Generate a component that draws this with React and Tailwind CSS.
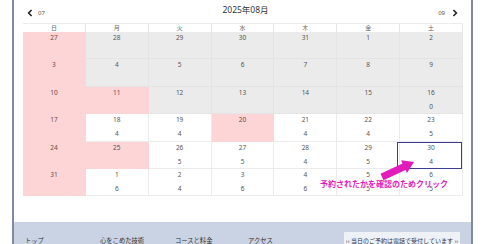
import React from "react";

const P = "pink", G = "gray", W = "white";
const rows = [
  [[27, P], [28, G], [29, G], [30, G], [31, G], [1, G], [2, G]],
  [[3, P], [4, G], [5, G], [6, G], [7, G], [8, G], [9, G]],
  [[10, P], [11, P], [12, G], [13, G], [14, G], [15, G], [16, G, 0]],
  [[17, P], [18, W, 4], [19, W, 4], [20, P], [21, W, 4], [22, W, 4], [23, W, 5]],
  [[24, P], [25, P], [26, W, 5], [27, W, 5], [28, W, 4], [29, W, 5], [30, W, 4, true]],
  [[31, P], [1, W, 6], [2, W, 4], [3, W, 6], [4, W, 6], [5, W, 5], [6, W, 5]],
];
const days = ["日", "月", "火", "水", "木", "金", "土"];

const bgClass = {
  pink: "bg-[#fdd5d6] border-[#fdd5d6] text-[#6e4848]",
  gray: "bg-[#ebebeb] border-[#e4e4e4] text-[#555]",
  white: "bg-white border-[#ebebeb] text-[#555]",
};

function Cell({ d, t, c, hl }) {
  return (
    <div className={`relative h-[27.4px] flex flex-col items-center pt-[1px] border-r border-b ${bgClass[t]}`}>
      <span className="text-[6.5px] leading-[9px]">{d}</span>
      {c !== undefined && <span className="mt-[5px] text-[6.5px] leading-[9px] text-[#555]">{c}</span>}
      {hl && <div className="absolute left-[-3px] right-[0px] top-[0px] bottom-[-1px] border-[1.5px] border-[#3d3d8e]" />}
    </div>
  );
}

function Chevron({ dir }) {
  return (
    <svg width="6" height="8" viewBox="0 0 6 8">
      {dir === "left" ? (
        <path d="M4.6 1 L1.6 4 L4.6 7" fill="none" stroke="#222" strokeWidth="1.6" />
      ) : (
        <path d="M1.4 1 L4.4 4 L1.4 7" fill="none" stroke="#222" strokeWidth="1.6" />
      )}
    </svg>
  );
}

export default function App() {
  return (
    <div
      className="relative w-[485px] h-[244px] overflow-hidden bg-white"
      style={{ fontFamily: '"Noto Sans", "Noto Sans CJK JP", sans-serif' }}
    >
      <div className="ml-[12px] w-[461px] h-full border-l-2 border-r-2 border-[#7f8ba6] flex flex-col overflow-hidden">
        {/* nav */}
        <div className="shrink-0 h-[23px] flex items-center justify-between px-[13px] pb-[2px]">
          <div className="flex items-center gap-[5px] w-[40px] pt-[4px]">
            <Chevron dir="left" />
            <span className="text-[6px] text-[#555] leading-none">07</span>
          </div>
          <div className="text-[8.5px] text-[#333] pl-[6px] leading-none pb-[1px]">2025年08月</div>
          <div className="flex items-center justify-end gap-[7px] w-[40px] pt-[4px]">
            <span className="text-[6px] text-[#555] leading-none">09</span>
            <Chevron dir="right" />
          </div>
        </div>
        {/* grid */}
        <div className="shrink-0 ml-[9px] w-[440px]">
          <div className="grid grid-cols-7 h-[9px] border-t border-[#ececec]">
            {days.map((d) => (
              <div key={d} className="flex items-center justify-center text-[6px] text-[#666] border-r border-[#e6e6e6] leading-none">
                {d}
              </div>
            ))}
          </div>
          <div className="grid grid-cols-7">
            {rows.flat().map(([d, t, c, hl], i) => (
              <Cell key={i} d={d} t={t} c={c} hl={hl} />
            ))}
          </div>
        </div>
        <div className="shrink-0 h-[26px]" />
        {/* footer */}
        <div className="shrink-0 h-[40px] bg-[#c9d3e3] flex items-start pl-[11px] pr-[11px] pt-[10px]">
          <div className="flex pt-[5px] text-[6.3px] text-[#333] leading-[8px]">
            <span className="w-[75px]">トップ</span>
            <span className="w-[75px]">心をこめた技術</span>
            <span className="w-[73px]">コースと料金</span>
            <span className="w-[70px]">アクセス</span>
          </div>
          <div className="ml-auto w-[116px] h-[30px] bg-[#eef1f6] flex justify-center pt-[5px] text-[6px] leading-[8px] text-[#334]">
            ›› 当日のご予約は電話で受付しています ››
          </div>
        </div>
      </div>

      {/* annotation arrow */}
      <svg className="absolute left-[377px] top-[158px]" width="40" height="24" viewBox="0 0 40 24">
        <polygon points="3.5,15.8 25.5,5.5 24.1,2.3 37,4 30,15 28.5,11.9 6.5,22.2" fill="#e21cba" />
      </svg>
      <div className="absolute left-[320px] top-[178px] text-[8px] font-bold text-[#e21cba] leading-[12px] whitespace-nowrap">
        予約されたかを確認のためクリック
      </div>
    </div>
  );
}
